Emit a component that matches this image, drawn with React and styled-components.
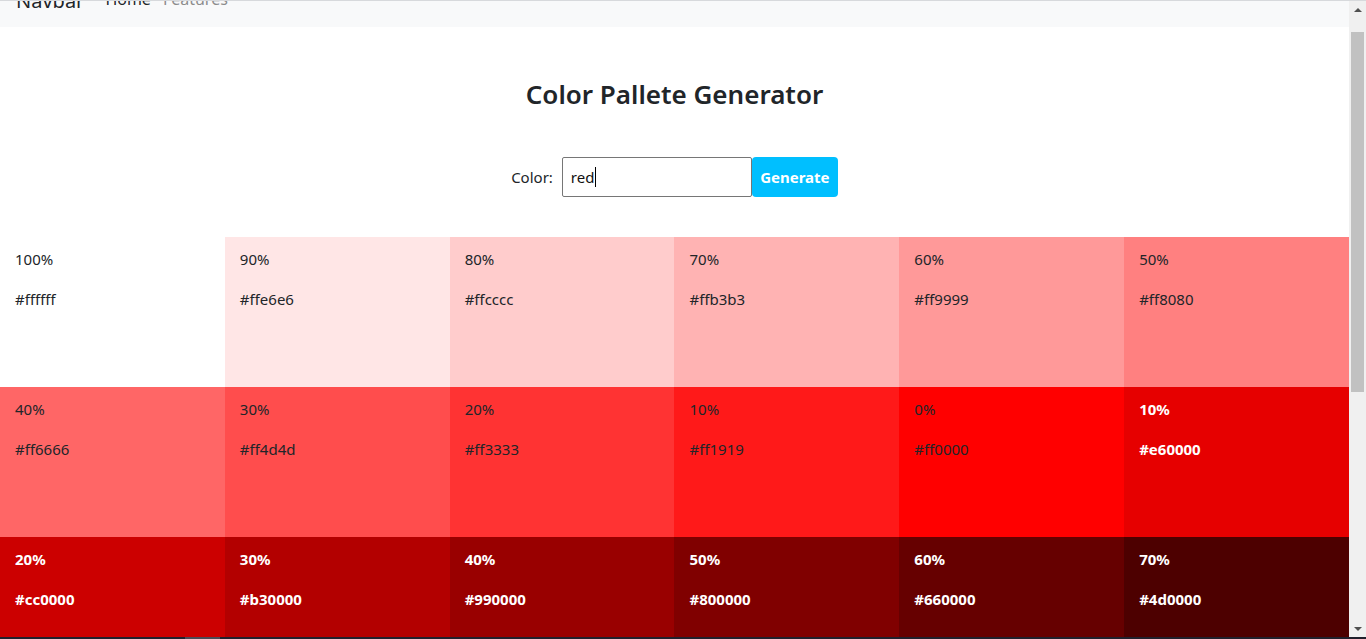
import React from 'react';
import styled, { createGlobalStyle } from 'styled-components';

const GlobalStyle = createGlobalStyle`
    html, body {
        margin: 0;
        padding: 0;
        overflow: hidden;
        background: #ffffff;
    }
    body {
        font-family: "Noto Sans", "Open Sans", Arial, sans-serif;
        color: #212529;
    }
`;

const Screen = styled.div`
    width: 1366px;
    height: 639px;
    display: flex;
    flex-direction: column;
    overflow: hidden;
    border-top: 1px solid #d7d9dc;
    box-sizing: border-box;
`;

const Body = styled.div`
    flex: 1;
    display: flex;
    min-height: 0;
`;

const Page = styled.div`
    flex: 1;
    overflow: hidden;
`;

const Navbar = styled.nav`
    height: 26px;
    background: #f8f9fa;
    overflow: hidden;
    display: flex;
    align-items: flex-start;
    padding-left: 16px;
`;

const Brand = styled.span`
    font-size: 20px;
    line-height: 30px;
    margin-top: -15px;
    margin-right: 21px;
    color: #212529;
`;

const NavLink = styled.span`
    font-size: 16px;
    line-height: 24px;
    margin-top: -14px;
    margin-right: 12px;
    color: ${p => (p.muted ? '#8c8c8c' : '#212529')};
`;

const Title = styled.h2`
    margin: 0;
    padding-top: 47px;
    text-align: center;
    font-size: 26px;
    line-height: 40px;
    font-weight: 600;
    color: #212529;
`;

const Form = styled.div`
    display: flex;
    justify-content: center;
    align-items: center;
    margin-top: 43px;
    height: 40px;
    margin-bottom: 40px;
`;

const Label = styled.label`
    font-size: 15px;
    margin-right: 9px;
    color: #212529;
`;

const Input = styled.div`
    width: 190px;
    height: 40px;
    box-sizing: border-box;
    border: 1px solid #767676;
    border-radius: 2px;
    display: flex;
    align-items: center;
    padding-left: 8px;
    font-size: 15px;
    color: #111;
`;

const Caret = styled.span`
    display: inline-block;
    width: 1px;
    height: 20px;
    background: #000;
    margin-left: 1px;
`;

const Button = styled.button`
    width: 86px;
    height: 40px;
    border: none;
    border-radius: 4px;
    background: #00bfff;
    color: #fff;
    font-family: inherit;
    font-size: 15px;
    font-weight: 700;
    padding: 0;
`;

const Grid = styled.div`
    display: grid;
    grid-template-columns: repeat(6, 1fr);
    grid-auto-rows: 150px;
`;

const Tile = styled.div`
    background: ${p => p.bg};
    color: ${p => (p.dark ? '#ffffff' : '#212529')};
    font-weight: ${p => (p.dark ? 700 : 400)};
    font-size: 15px;
    padding: 11px 15px;
`;

const Line = styled.p`
    margin: 0 0 18px;
    line-height: 22px;
`;

const Scrollbar = styled.div`
    width: 17px;
    background: #f0f0f0;
    display: flex;
    flex-direction: column;
    align-items: center;
`;

const Arrow = styled.div`
    width: 0;
    height: 0;
    border-left: 4px solid transparent;
    border-right: 4px solid transparent;
    ${p => (p.down ? 'border-top: 4px solid #505050;' : 'border-bottom: 4px solid #505050;')}
    margin: ${p => (p.down ? 'auto 0 6px' : '7px 0 0')};
`;

const Thumb = styled.div`
    width: 13px;
    height: 360px;
    margin-top: 20px;
    background: #c1c1c1;
`;

const Taskbar = styled.div`
    height: 2px;
    background: #20202c;
    display: flex;
`;

const TaskItem = styled.div`
    width: 35px;
    margin-left: 185px;
    background: #4a4a55;
`;

const swatches = [
    ['100%', '#ffffff'], ['90%', '#ffe6e6'], ['80%', '#ffcccc'],
    ['70%', '#ffb3b3'], ['60%', '#ff9999'], ['50%', '#ff8080'],
    ['40%', '#ff6666'], ['30%', '#ff4d4d'], ['20%', '#ff3333'],
    ['10%', '#ff1919'], ['0%', '#ff0000'], ['10%', '#e60000', true],
    ['20%', '#cc0000', true], ['30%', '#b30000', true], ['40%', '#990000', true],
    ['50%', '#800000', true], ['60%', '#660000', true], ['70%', '#4d0000', true],
];

const App = () => {
    return (
        <Screen>
            <GlobalStyle />
            <Body>
                <Page>
                    <Navbar>
                        <Brand>Navbar</Brand>
                        <NavLink>Home</NavLink>
                        <NavLink muted>Features</NavLink>
                    </Navbar>
                    <Title>Color Pallete Generator</Title>
                    <Form>
                        <Label>Color:</Label>
                        <Input>
                            red<Caret />
                        </Input>
                        <Button>Generate</Button>
                    </Form>
                    <Grid>
                        {swatches.map(([pct, hex, dark], i) => (
                            <Tile key={i} bg={hex} dark={dark}>
                                <Line>{pct}</Line>
                                <Line>{hex}</Line>
                            </Tile>
                        ))}
                    </Grid>
                </Page>
                <Scrollbar>
                    <Arrow />
                    <Thumb />
                    <Arrow down />
                </Scrollbar>
            </Body>
            <Taskbar>
                <TaskItem />
            </Taskbar>
        </Screen>
    );
};

export default App;
